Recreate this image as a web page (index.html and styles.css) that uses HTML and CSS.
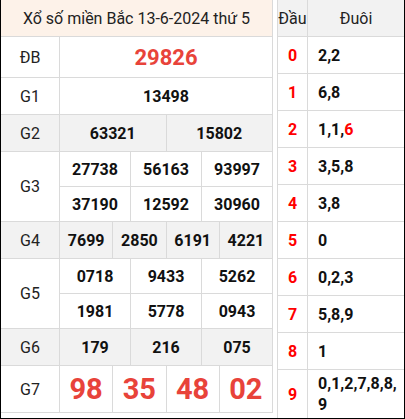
FILE: index.html
```html
<!DOCTYPE html>
<html lang="vi">
<head>
    <meta charset="UTF-8">
    <meta name="viewport" content="width=device-width, initial-scale=1.0">
    <title>Xổ số miền Bắc 13-6-2024</title>
    <link rel="stylesheet" href="styles.css">
</head>
<body>
    <div class="wrap">
        <div class="kq">
            <div class="title">Xổ số miền Bắc 13-6-2024 thứ 5</div>

            <div class="label r-db">ĐB</div>
            <div class="num special c12 r-db">29826</div>

            <div class="label r-g1">G1</div>
            <div class="num c12 r-g1">13498</div>

            <div class="label gray r-g2">G2</div>
            <div class="num gray c6 r-g2">63321</div>
            <div class="num gray c6 r-g2">15802</div>

            <div class="label r-g3">G3</div>
            <div class="num c4 r-g3a">27738</div>
            <div class="num c4 r-g3a">56163</div>
            <div class="num c4 r-g3a">93997</div>
            <div class="num c4 r-g3b">37190</div>
            <div class="num c4 r-g3b">12592</div>
            <div class="num c4 r-g3b">30960</div>

            <div class="label gray r-g4">G4</div>
            <div class="num gray c3 r-g4">7699</div>
            <div class="num gray c3 r-g4">2850</div>
            <div class="num gray c3 r-g4">6191</div>
            <div class="num gray c3 r-g4">4221</div>

            <div class="label r-g5">G5</div>
            <div class="num c4 r-g5a">0718</div>
            <div class="num c4 r-g5a">9433</div>
            <div class="num c4 r-g5a">5262</div>
            <div class="num c4 r-g5b">1981</div>
            <div class="num c4 r-g5b">5778</div>
            <div class="num c4 r-g5b">0943</div>

            <div class="label gray r-g6">G6</div>
            <div class="num gray c4 r-g6">179</div>
            <div class="num gray c4 r-g6">216</div>
            <div class="num gray c4 r-g6">075</div>

            <div class="label r-g7">G7</div>
            <div class="num big c3 r-g7">98</div>
            <div class="num big c3 r-g7">35</div>
            <div class="num big c3 r-g7">48</div>
            <div class="num big c3 r-g7">02</div>
        </div>

        <div class="loto">
            <div class="head">Đầu</div>
            <div class="head">Đuôi</div>

            <div class="dau">0</div><div class="duoi">2,2</div>
            <div class="dau">1</div><div class="duoi">6,8</div>
            <div class="dau">2</div><div class="duoi">1,1,<span class="hl">6</span></div>
            <div class="dau">3</div><div class="duoi">3,5,8</div>
            <div class="dau">4</div><div class="duoi">3,8</div>
            <div class="dau">5</div><div class="duoi">0</div>
            <div class="dau">6</div><div class="duoi">0,2,3</div>
            <div class="dau">7</div><div class="duoi">5,8,9</div>
            <div class="dau">8</div><div class="duoi">1</div>
            <div class="dau">9</div><div class="duoi"><span>0,<wbr>1,<wbr>2,<wbr>7,<wbr>8,<wbr>8,<wbr>9</span></div>
        </div>
    </div>
</body>
</html>
```

FILE: styles.css
```css
body {
    margin: 0;
    font-family: Roboto, "Liberation Sans", sans-serif;
    color: #111;
}
.wrap {
    width: 405px;
    height: 419px;
    box-sizing: border-box;
    border: 1px solid #000;
    border-top: none;
    display: flex;
    gap: 4px;
    align-items: flex-start;
    overflow: hidden;
}

/* bang ket qua */
.kq {
    width: 272px;
    min-width: 0;
    flex-shrink: 0;
    box-sizing: border-box;
    display: grid;
    grid-template-columns: 58px repeat(12, minmax(0, 1fr));
    grid-template-rows: 36px 40px 36px 36px 34px 34px 36px 34px 34px 36px 46px;
    gap: 1px;
    padding: 0 1px 1px 0;
    background: #dadada;
}
.kq > div {
    background: #fff;
    display: flex;
    align-items: center;
    justify-content: center;
    min-width: 0;
}
.kq .gray {
    background: #f2f2f2;
}
.title {
    grid-column: 1 / -1;
    background: #fdf2e9 !important;
    font-size: 16px;
    color: #222;
    white-space: nowrap;
}
.label {
    grid-column: 1;
    font-size: 16px;
    color: #222;
}
.num {
    font-size: 16px;
    font-weight: bold;
}
.c12 { grid-column: span 12; }
.c6 { grid-column: span 6; }
.c4 { grid-column: span 4; }
.c3 { grid-column: span 3; }

.r-db { grid-row: 2; }
.r-g1 { grid-row: 3; }
.r-g2 { grid-row: 4; }
.r-g3 { grid-row: 5 / span 2; }
.r-g3a { grid-row: 5; }
.r-g3b { grid-row: 6; }
.r-g4 { grid-row: 7; }
.r-g5 { grid-row: 8 / span 2; }
.r-g5a { grid-row: 8; }
.r-g5b { grid-row: 9; }
.r-g6 { grid-row: 10; }
.r-g7 { grid-row: 11; }

.special {
    font-size: 22px;
    color: #e8433a;
}
.big {
    font-size: 29px;
    color: #e8433a;
}

/* bang loto */
.loto {
    width: 127px;
    height: 418px;
    flex-shrink: 0;
    min-width: 0;
    box-sizing: border-box;
    display: grid;
    grid-template-columns: 29px minmax(0, 1fr);
    grid-template-rows: 36px repeat(9, 36px) 1fr;
    gap: 1px;
    padding-left: 1px;
    background: #dadada;
}
.loto > div {
    background: #fff;
    display: flex;
    align-items: center;
    font-size: 16px;
    min-width: 0;
}
.loto .head {
    background: #f2f2f2;
    justify-content: center;
    color: #222;
    white-space: nowrap;
}
.dau {
    justify-content: center;
    color: #f00;
    font-weight: bold;
}
.duoi {
    padding: 0 4px 0 10px;
    font-weight: bold;
    line-height: 21px;
}
.hl {
    color: #f00;
}
```
